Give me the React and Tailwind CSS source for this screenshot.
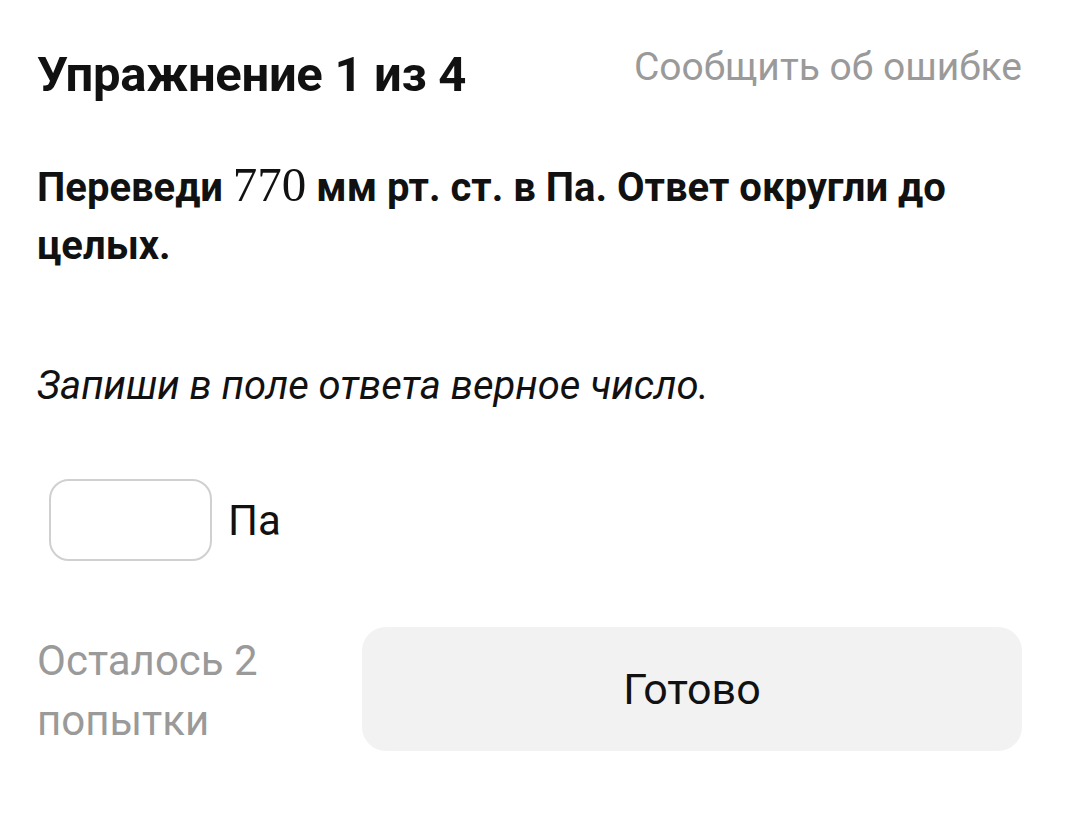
export default function App() {
  return (
    <div className="min-h-[823px] w-[1068px] bg-white pl-[37px] pr-[46px] pt-[40px] font-['Roboto','Noto_Sans',sans-serif] text-[#111]">
      {/* шапка */}
      <div className="flex items-start justify-between">
        <h1 className="mt-[5px] text-[49px] font-bold leading-[60px] tracking-[-0.3px]">Упражнение 1 из 4</h1>
        <button className="mt-[3px] text-[39px] leading-[48px] text-[#9a9a9a]">Сообщить об ошибке</button>
      </div>

      {/* вопрос */}
      <p className="mt-[54px] text-[40px] font-bold leading-[58px]">
        Переведи
        <span className="mx-[10px] inline-block font-['Liberation_Serif',serif] text-[49px] font-normal leading-[40px]">770</span>
        мм рт. ст. в Па. Ответ округли до целых.
      </p>

      <p className="mt-[86px] text-[40px] italic leading-[50px]">Запиши в поле ответа верное число.</p>

      {/* поле ответа */}
      <div className="mt-[68px] flex items-center gap-[16px] pl-[12px]">
        <input className="h-[82px] w-[163px] rounded-[20px] border-2 border-[#d0d0d0] outline-none" />
        <span className="text-[42px]">Па</span>
      </div>

      {/* низ */}
      <div className="mt-[66px] flex items-start gap-[100px]">
        <div className="w-[225px] pt-[4px] text-[42px] leading-[60px] text-[#9a9a9a]">Осталось 2 попытки</div>
        <button className="h-[124px] flex-1 rounded-[24px] bg-[#f2f2f2] text-[43px] text-[#111]">Готово</button>
      </div>
    </div>
  );
}
